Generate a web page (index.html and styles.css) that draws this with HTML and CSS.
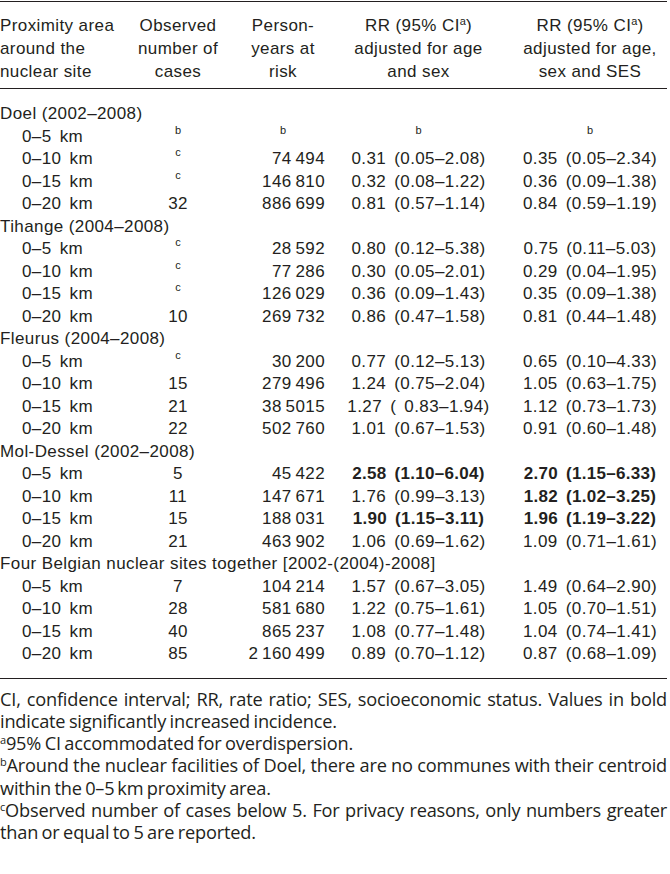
FILE: index.html
```html
<!DOCTYPE html>
<html lang="en">
<head>
<meta charset="utf-8">
<title>Proximity table</title>
<link rel="stylesheet" href="styles.css">
</head>
<body>
<div class="page">
<table class="tbl">
  <colgroup>
    <col class="c1"><col class="c2"><col class="c3"><col class="c4"><col class="c5">
  </colgroup>
  <thead>
    <tr>
      <th class="h1">Proximity area<br>around the<br>nuclear site</th>
      <th class="h2">Observed<br>number of<br>cases</th>
      <th class="h3">Person-<br>years at<br>risk</th>
      <th class="h4">RR (95% CI<sup>a</sup>)<br>adjusted for age<br>and sex</th>
      <th class="h5">RR (95% CI<sup>a</sup>)<br>adjusted for age,<br>sex and SES</th>
    </tr>
  </thead>
  <tbody>
    <tr class="sec first"><td colspan="5">Doel (2002–2008)</td></tr>
    <tr><td class="lab">0–5 km</td><td class="obs"><sup>b</sup></td><td class="py ctr"><sup>b</sup></td><td class="rr"><sup>b</sup></td><td class="rr2"><sup>b</sup></td></tr>
    <tr><td class="lab">0–10 km</td><td class="obs"><sup>c</sup></td><td class="py">74&#8201;494</td><td class="rr">0.31 (0.05–2.08)</td><td class="rr2">0.35 (0.05–2.34)</td></tr>
    <tr><td class="lab">0–15 km</td><td class="obs"><sup>c</sup></td><td class="py">146&#8201;810</td><td class="rr">0.32 (0.08–1.22)</td><td class="rr2">0.36 (0.09–1.38)</td></tr>
    <tr><td class="lab">0–20 km</td><td class="obs">32</td><td class="py">886&#8201;699</td><td class="rr">0.81 (0.57–1.14)</td><td class="rr2">0.84 (0.59–1.19)</td></tr>

    <tr class="sec"><td colspan="5">Tihange (2004–2008)</td></tr>
    <tr><td class="lab">0–5 km</td><td class="obs"><sup>c</sup></td><td class="py">28&#8201;592</td><td class="rr">0.80 (0.12–5.38)</td><td class="rr2">0.75 (0.11–5.03)</td></tr>
    <tr><td class="lab">0–10 km</td><td class="obs"><sup>c</sup></td><td class="py">77&#8201;286</td><td class="rr">0.30 (0.05–2.01)</td><td class="rr2">0.29 (0.04–1.95)</td></tr>
    <tr><td class="lab">0–15 km</td><td class="obs"><sup>c</sup></td><td class="py">126&#8201;029</td><td class="rr">0.36 (0.09–1.43)</td><td class="rr2">0.35 (0.09–1.38)</td></tr>
    <tr><td class="lab">0–20 km</td><td class="obs">10</td><td class="py">269&#8201;732</td><td class="rr">0.86 (0.47–1.58)</td><td class="rr2">0.81 (0.44–1.48)</td></tr>

    <tr class="sec"><td colspan="5">Fleurus (2004–2008)</td></tr>
    <tr><td class="lab">0–5 km</td><td class="obs"><sup>c</sup></td><td class="py">30&#8201;200</td><td class="rr">0.77 (0.12–5.13)</td><td class="rr2">0.65 (0.10–4.33)</td></tr>
    <tr><td class="lab">0–10 km</td><td class="obs">15</td><td class="py">279&#8201;496</td><td class="rr">1.24 (0.75–2.04)</td><td class="rr2">1.05 (0.63–1.75)</td></tr>
    <tr><td class="lab">0–15 km</td><td class="obs">21</td><td class="py">38&#8201;5015</td><td class="rr">1.27 ( 0.83–1.94)</td><td class="rr2">1.12 (0.73–1.73)</td></tr>
    <tr><td class="lab">0–20 km</td><td class="obs">22</td><td class="py">502&#8201;760</td><td class="rr">1.01 (0.67–1.53)</td><td class="rr2">0.91 (0.60–1.48)</td></tr>

    <tr class="sec"><td colspan="5">Mol-Dessel (2002–2008)</td></tr>
    <tr><td class="lab">0–5 km</td><td class="obs">5</td><td class="py">45&#8201;422</td><td class="rr"><b>2.58 (1.10–6.04)</b></td><td class="rr2"><b>2.70 (1.15–6.33)</b></td></tr>
    <tr><td class="lab">0–10 km</td><td class="obs">11</td><td class="py">147&#8201;671</td><td class="rr">1.76 (0.99–3.13)</td><td class="rr2"><b>1.82 (1.02–3.25)</b></td></tr>
    <tr><td class="lab">0–15 km</td><td class="obs">15</td><td class="py">188&#8201;031</td><td class="rr"><b>1.90 (1.15–3.11)</b></td><td class="rr2"><b>1.96 (1.19–3.22)</b></td></tr>
    <tr><td class="lab">0–20 km</td><td class="obs">21</td><td class="py">463&#8201;902</td><td class="rr">1.06 (0.69–1.62)</td><td class="rr2">1.09 (0.71–1.61)</td></tr>

    <tr class="sec"><td colspan="5">Four Belgian nuclear sites together [2002-(2004)-2008]</td></tr>
    <tr><td class="lab">0–5 km</td><td class="obs">7</td><td class="py">104&#8201;214</td><td class="rr">1.57 (0.67–3.05)</td><td class="rr2">1.49 (0.64–2.90)</td></tr>
    <tr><td class="lab">0–10 km</td><td class="obs">28</td><td class="py">581&#8201;680</td><td class="rr">1.22 (0.75–1.61)</td><td class="rr2">1.05 (0.70–1.51)</td></tr>
    <tr><td class="lab">0–15 km</td><td class="obs">40</td><td class="py">865&#8201;237</td><td class="rr">1.08 (0.77–1.48)</td><td class="rr2">1.04 (0.74–1.41)</td></tr>
    <tr class="last"><td class="lab">0–20 km</td><td class="obs">85</td><td class="py">2&#8201;160&#8201;499</td><td class="rr">0.89 (0.70–1.12)</td><td class="rr2">0.87 (0.68–1.09)</td></tr>
  </tbody>
</table>
<div class="notes">
  <p><span class="ln full">CI, confidence interval; RR, rate ratio; SES, socioeconomic status. Values in bold</span><span class="ln">indicate significantly increased incidence.</span></p>
  <p><span class="ln"><sup>a</sup>95% CI accommodated for overdispersion.</span></p>
  <p><span class="ln full"><sup>b</sup>Around the nuclear facilities of Doel, there are no communes with their centroid</span><span class="ln">within the 0–5&#8201;km proximity area.</span></p>
  <p><span class="ln full"><sup>c</sup>Observed number of cases below 5. For privacy reasons, only numbers greater</span><span class="ln">than or equal to 5 are reported.</span></p>
</div>
</div>
</body>
</html>
```

FILE: styles.css
```css
html, body {
  margin: 0;
  padding: 0;
  background: #ffffff;
}

body {
  color: #231f20;
  font-family: "Liberation Sans", Arial, sans-serif;
}

.page {
  width: 667px;
  padding-top: 1px;
}

.tbl {
  width: 667px;
  border-collapse: collapse;
  table-layout: fixed;
  font-size: 17px;
  letter-spacing: 0.4px;
}

.c1 { width: 133px; }
.c2 { width: 90px; }
.c3 { width: 112px; }
.c4 { width: 167px; }
.c5 { width: 165px; }

.tbl thead tr {
  border-top: 1.5px solid #231f20;
  border-bottom: 1.5px solid #231f20;
}

.tbl th {
  font-weight: normal;
  line-height: 23px;
  padding: 12px 0 5px 0;
  text-align: center;
  vertical-align: bottom;
  white-space: nowrap;
}

.tbl th.h1 { text-align: left; }
.tbl th.h3 { padding-left: 8px; }
.tbl th.h5 { padding-left: 11px; }

.tbl td {
  padding: 0;
  line-height: 22.5px;
  white-space: nowrap;
  vertical-align: middle;
}

.tbl tr.first td { padding-top: 14px; }
.tbl tr.last td { padding-bottom: 12px; }
.tbl tbody tr.last { border-bottom: 1.5px solid #231f20; }

.tbl td.lab { padding-left: 22px; word-spacing: 3px; }
.tbl td.obs { text-align: center; }
.tbl td.py { text-align: right; padding-right: 10px; }
.tbl td.py.ctr { text-align: center; padding-left: 8px; padding-right: 0; }
.tbl td.rr { text-align: center; word-spacing: 3px; }
.tbl td.rr2 { text-align: center; padding-left: 11px; word-spacing: 3px; }

.tbl sup {
  font-size: 11px;
  line-height: 0;
  vertical-align: 6px;
  letter-spacing: 0;
}

.tbl td sup { vertical-align: 8px; }

.tbl b { font-weight: bold; letter-spacing: 0.3px; }

.notes {
  margin-top: 9px;
  font-family: "Open Sans", "Liberation Sans", sans-serif;
  font-stretch: 92%;
  font-size: 18.2px;
  line-height: 22.3px;
  word-spacing: -1px;
  letter-spacing: -0.2px;
}

.notes p { margin: 0; }

.notes .ln {
  display: block;
  white-space: nowrap;
  text-align: left;
}

.notes .ln.full {
  text-align: justify;
  text-align-last: justify;
}

.notes sup {
  font-size: 11px;
  line-height: 0;
  vertical-align: 6px;
}
```
